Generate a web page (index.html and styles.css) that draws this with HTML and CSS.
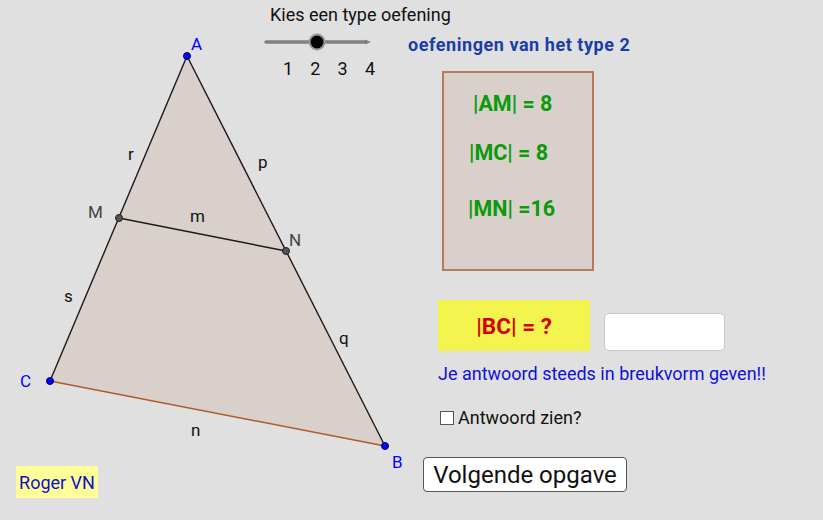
FILE: index.html
```html
<!DOCTYPE html>
<html>
<head>
<meta charset="utf-8">
<link rel="stylesheet" href="styles.css">
</head>
<body>
<div class="canvas">
  <svg class="geo" width="823" height="520" viewBox="0 0 823 520">
    <polygon points="187,56 385,446 50,381" fill="#d9d0cb"/>
    <line x1="187" y1="56" x2="50" y2="381" stroke="#1a1a1a" stroke-width="1.4"/>
    <line x1="187" y1="56" x2="385" y2="446" stroke="#1a1a1a" stroke-width="1.4"/>
    <line x1="50" y1="381" x2="385" y2="446" stroke="#b05a2c" stroke-width="1.4"/>
    <line x1="119" y1="218" x2="286" y2="251" stroke="#1a1a1a" stroke-width="1.4"/>
    <circle cx="119" cy="218" r="3.5" fill="#555" stroke="#222" stroke-width="1"/>
    <circle cx="286" cy="251" r="3.5" fill="#555" stroke="#222" stroke-width="1"/>
    <circle cx="187" cy="56" r="3.5" fill="#0000ff" stroke="#000066" stroke-width="1"/>
    <circle cx="385" cy="446" r="3.5" fill="#0000ff" stroke="#000066" stroke-width="1"/>
    <circle cx="50" cy="381" r="3.5" fill="#0000ff" stroke="#000066" stroke-width="1"/>
    <g class="lbl">
      <text x="191" y="50" class="pt">A</text>
      <text x="392" y="468" class="pt">B</text>
      <text x="20" y="387" class="pt">C</text>
      <text x="88" y="218" class="mid">M</text>
      <text x="289" y="246" class="mid">N</text>
      <text x="190" y="222">m</text>
      <text x="128" y="160">r</text>
      <text x="258" y="168">p</text>
      <text x="64" y="302">s</text>
      <text x="339" y="344">q</text>
      <text x="191" y="436">n</text>
    </g>
    <line x1="266" y1="42" x2="366" y2="42" stroke="#808080" stroke-width="3.5" stroke-linecap="round"/>
    <polygon points="365,39.5 371,42 365,44.5" fill="#808080"/>
    <circle cx="317" cy="42" r="8.5" fill="#999"/>
    <circle cx="317" cy="42" r="6.5" fill="#000"/>
  </svg>

  <div class="slider-title">Kies een type oefening</div>
  <div class="ticks"><span>1</span><span>2</span><span>3</span><span>4</span></div>
  <div class="type-label">oefeningen van het type 2</div>

  <div class="given">
    <div class="g1">|AM| = 8</div>
    <div class="g2">|MC| = 8</div>
    <div class="g3">|MN| =16</div>
  </div>

  <div class="question">|BC| = ?</div>
  <div class="answer"></div>
  <div class="hint">Je antwoord steeds in breukvorm geven!!</div>
  <label class="check"><span class="box"></span>Antwoord zien?</label>
  <div class="next">Volgende opgave</div>
  <div class="author">Roger VN</div>
</div>
</body>
</html>
```
FILE: styles.css
```css
html, body {
  margin: 0;
  padding: 0;
  background: #e0e0e0;
}
body {
  font-family: Roboto, "Liberation Sans", sans-serif;
}
.canvas {
  position: relative;
  width: 823px;
  height: 520px;
  overflow: hidden;
  background: #e0e0e0;
}
.geo {
  position: absolute;
  left: 0;
  top: 0;
}
.lbl text {
  font-family: Roboto, "Liberation Sans", sans-serif;
  font-size: 17px;
  fill: #111;
}
.lbl text.pt {
  fill: #0000ff;
}
.lbl text.mid {
  fill: #444;
}
.slider-title {
  position: absolute;
  left: 270px;
  top: 4px;
  font-size: 18px;
  color: #111;
}
.ticks {
  position: absolute;
  left: 283px;
  top: 58px;
  display: flex;
  font-size: 18px;
  color: #111;
}
.ticks span {
  width: 27.3px;
}
.type-label {
  position: absolute;
  left: 408px;
  top: 34px;
  font-size: 18px;
  letter-spacing: 0.55px;
  font-weight: bold;
  color: #1a3ea8;
}
.given {
  position: absolute;
  left: 442px;
  top: 71px;
  width: 148px;
  height: 196px;
  background: #d9d0cb;
  border: 2px solid #b87a5c;
  color: #0a9a0a;
  font-weight: bold;
  font-size: 21.5px;
}
.given div {
  position: absolute;
}
.g1 { left: 29px; top: 18px; }
.g2 { left: 25px; top: 67px; }
.g3 { left: 24px; top: 123px; }
.question {
  position: absolute;
  left: 438px;
  top: 300px;
  width: 152px;
  height: 51px;
  background: #f4f44e;
  color: #d40000;
  font-weight: bold;
  font-size: 22.5px;
  display: flex;
  align-items: center;
  justify-content: center;
}
.answer {
  position: absolute;
  left: 604px;
  top: 313px;
  width: 119px;
  height: 36px;
  background: #fff;
  border: 1.5px solid #c8c8c8;
  border-radius: 5px;
}
.hint {
  position: absolute;
  left: 438px;
  top: 363px;
  font-size: 18px;
  color: #1010d8;
}
.check {
  position: absolute;
  left: 440px;
  top: 407px;
  display: flex;
  align-items: center;
  gap: 4px;
  font-size: 18px;
  color: #111;
}
.check .box {
  width: 12px;
  height: 12px;
  border: 1.5px solid #555;
  background: #fff;
}
.next {
  position: absolute;
  left: 423px;
  top: 457px;
  width: 202px;
  height: 33px;
  background: #fff;
  border: 1.5px solid #555;
  border-radius: 4px;
  display: flex;
  align-items: center;
  justify-content: center;
  font-size: 24px;
  color: #111;
}
.author {
  position: absolute;
  left: 16px;
  top: 466px;
  width: 82px;
  height: 32px;
  background: #ffff99;
  color: #1010c8;
  font-size: 18px;
  display: flex;
  align-items: center;
  justify-content: center;
}
```
